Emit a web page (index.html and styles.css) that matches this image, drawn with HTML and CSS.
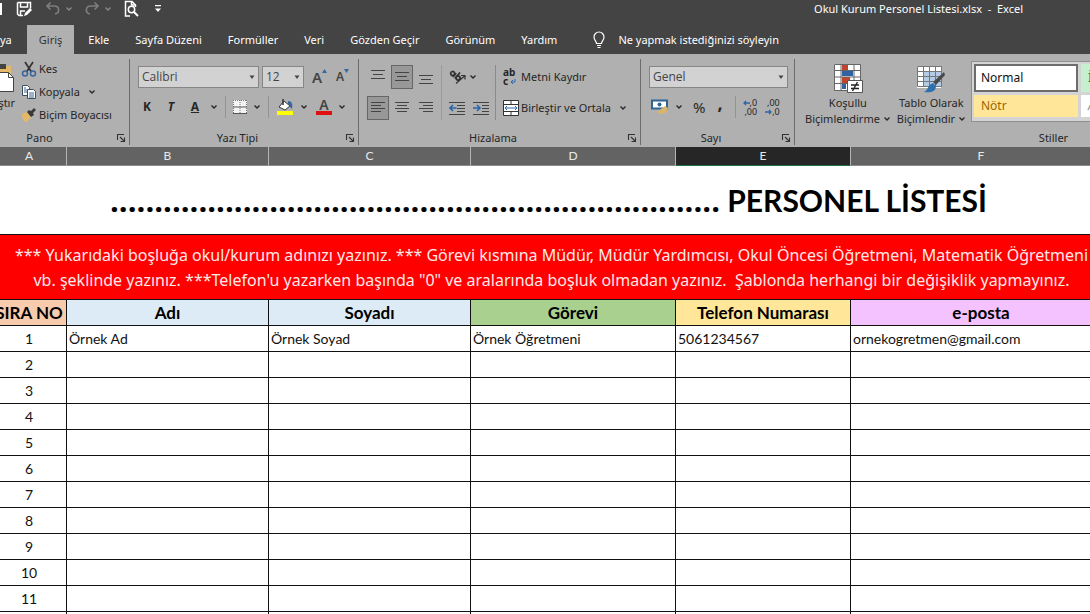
FILE: index.html
```html
<!DOCTYPE html>
<html lang="tr">
<head>
<meta charset="utf-8">
<title>Okul Kurum Personel Listesi.xlsx - Excel</title>
<link rel="stylesheet" href="styles.css">
</head>
<body>
<svg class="defs" aria-hidden="true">
  <symbol id="chev" viewBox="0 0 8 8"><path d="M1.5 2.5 4 5l2.500-2.500" fill="none" stroke="currentColor" stroke-width="1.300"/></symbol>
  <symbol id="tri" viewBox="0 0 8 8"><path d="M1.500 2.500h5L4 6z" fill="#444"/></symbol>
  <symbol id="launch" viewBox="0 0 10 10"><path d="M1.500 7V1.500H8M4 4l4 4M8.500 4.500v4h-4" fill="none" stroke="#333" stroke-width="1.100"/></symbol>
</svg>

<header class="titlebar">
  <div class="quick">
    <span class="edge"></span>
    <button class="ico save" aria-label="Kaydet"><svg width="16" height="16" viewBox="0 0 16 16"><path d="M1.500 1.500h13v6M7 14.500H3L1.500 13V1.500M4.500 2v4h7V2M4.500 14v-4H9" fill="none" stroke="#fff" stroke-width="1.500"/><path d="m8 15 1-3 5-5 2 2-5 5z" fill="#fff"/></svg></button>
    <button class="ico undo" aria-label="Geri al"><svg width="16" height="16" viewBox="0 0 16 16"><path d="M5.500 1.500 2 5l3.500 3.500M2 5h7c6 0 6 7 1 8" fill="none" stroke="#7d7d7d" stroke-width="1.700"/></svg><svg class="dim" width="8" height="8"><use href="#chev"/></svg></button>
    <button class="ico redo" aria-label="Yinele"><svg width="16" height="16" viewBox="0 0 16 16"><path d="M10.500 1.500 14 5l-3.500 3.500M14 5H7C1 5 1 12 6 13" fill="none" stroke="#7d7d7d" stroke-width="1.700"/></svg><svg class="dim" width="8" height="8"><use href="#chev"/></svg></button>
    <button class="ico preview" aria-label="Baskı önizleme"><svg width="16" height="18" viewBox="0 0 16 18"><path d="M7 16H2.500V1.500H9L12.500 5v2M8.500 1.500V5h4" fill="none" stroke="#fff" stroke-width="1.500"/><circle cx="8.500" cy="9.500" r="3.200" fill="none" stroke="#fff" stroke-width="1.500"/><path d="m11 12 4 4" stroke="#fff" stroke-width="2"/></svg></button>
    <button class="ico" aria-label="Özelleştir"><svg width="8" height="8" viewBox="0 0 8 8"><path d="M1 0h6v1.300H1zM1 3.500h6L4 7z" fill="#fff"/></svg></button>
  </div>
  <div class="doc">Okul Kurum Personel Listesi.xlsx&nbsp; -&nbsp; Excel</div>
</header>

<nav class="tabs">
  <button class="tab cut">ya</button>
  <button class="tab active">Giriş</button>
  <button class="tab">Ekle</button>
  <button class="tab">Sayfa Düzeni</button>
  <button class="tab">Formüller</button>
  <button class="tab">Veri</button>
  <button class="tab">Gözden Geçir</button>
  <button class="tab">Görünüm</button>
  <button class="tab">Yardım</button>
  <button class="tab tell"><svg width="14" height="18" viewBox="0 0 14 18"><path d="M4.500 12.500c0-2.500-2.500-3-2.500-6.500a5 5 0 0 1 10 0c0 3.500-2.500 4-2.500 6.500zM5 14.500h4M5.500 16.500h3" fill="none" stroke="#fff" stroke-width="1.200"/></svg>Ne yapmak istediğinizi söyleyin</button>
</nav>

<section class="ribbon">
  <div class="group pano">
    <div class="body">
      <button class="paste"><svg width="24" height="30" viewBox="0 0 24 30"><path d="M2 3h18v23H2z" fill="#e3b968"/><path d="M6 1h9v5H6z" fill="#444"/><path d="M8.500 9.500h9l5 5v14h-14z" fill="#fff" stroke="#444"/><path d="M17.500 9.500v5h5" fill="none" stroke="#444"/></svg>ştır</button>
      <div class="stack">
        <button class="cmd"><svg width="16" height="16" viewBox="0 0 16 16"><path d="m4 1 6.500 10M12 1 5.500 11" stroke="#333" stroke-width="1.700"/><g fill="none" stroke="#38679a" stroke-width="1.500"><circle cx="4" cy="12.500" r="2.500"/><circle cx="12" cy="12.500" r="2.500"/></g></svg>Kes</button>
        <button class="cmd"><svg width="16" height="16" viewBox="0 0 16 16"><g fill="#fff" stroke="#3e4c5c"><path d="M1.500 1.500h5l2 2v8h-7z"/><path d="M6.500 5.500h6l2 2v7h-8z"/></g><path d="M3 4h2M3 6h3M3 8h3M8 9h5M8 11h5M8 13h5" stroke="#38679a"/></svg>Kopyala<svg class="gap" width="8" height="8"><use href="#chev"/></svg></button>
        <button class="cmd"><svg width="16" height="16" viewBox="0 0 16 16"><path d="m1 7 5-2 4 5-4 5c-3 0-5-3-5-8z" fill="#e3b968"/><path d="m6 5 2-2 2 1 3-3 2 2-3 3 1 2-3 2z" fill="#3a3a3a"/></svg>Biçim Boyacısı</button>
      </div>
    </div>
    <div class="foot"><span>Pano</span><button class="launch" aria-label="Pano ayarları"><svg width="10" height="10"><use href="#launch"/></svg></button></div>
  </div>

  <div class="group font">
    <div class="body rows">
      <div class="row">
        <label class="pick name"><select aria-label="Yazı tipi"><option>Calibri</option></select><svg width="8" height="8"><use href="#tri"/></svg></label>
        <label class="pick size"><select aria-label="Boyut"><option>12</option></select><svg width="8" height="8"><use href="#tri"/></svg></label>
        <button class="grow" aria-label="Büyüt"><b>A</b><svg width="5" height="4" viewBox="0 0 5 4"><path d="M0 4h5L2.500 0z" fill="#38679a"/></svg></button>
        <button class="grow small" aria-label="Küçült"><b>A</b><svg width="5" height="4" viewBox="0 0 5 4"><path d="M0 0h5L2.500 4z" fill="#38679a"/></svg></button>
      </div>
      <div class="row tools">
        <button class="letter bold">K</button>
        <button class="letter italic">T</button>
        <button class="letter"><u>A</u></button>
        <svg width="8" height="8"><use href="#chev"/></svg>
        <i class="vr"></i>
        <button aria-label="Kenarlıklar"><svg width="14" height="14" viewBox="0 0 14 14"><path d="M0 0h14v14H0z" fill="#f4f4f4"/><path d="M.5 0v14M7 0v14M13.500 0v14M0 .5h14" stroke="#777" stroke-dasharray="1 1"/><path d="M0 7h14M0 13.500h14" stroke="#555"/></svg></button>
        <svg width="8" height="8"><use href="#chev"/></svg>
        <i class="vr"></i>
        <button aria-label="Dolgu rengi"><svg width="18" height="18" viewBox="0 0 18 18"><path d="M1 13h16v4H1z" fill="#ff0"/><path d="m8 3 6 5-5 4-6-3z" fill="#fff" stroke="#333"/><path d="M7 1v6" stroke="#333" stroke-width="1.500"/><path d="M12 3c4 0 5 3 4 8-2-1-2-4-4-5z" fill="#38679a"/></svg></button>
        <svg width="8" height="8"><use href="#chev"/></svg>
        <button class="color" aria-label="Yazı rengi">A</button>
        <svg width="8" height="8"><use href="#chev"/></svg>
      </div>
    </div>
    <div class="foot"><span>Yazı Tipi</span><button class="launch" aria-label="Yazı tipi ayarları"><svg width="10" height="10"><use href="#launch"/></svg></button></div>
  </div>

  <div class="group align">
    <div class="body cols">
      <div class="grid3">
        <button class="al" aria-label="Üste hizala"><svg width="14" height="14" viewBox="0 0 14 14"><path d="M0 .5h14M2 4.500h10M0 8.500h14" stroke="#444"/></svg></button>
        <button class="al on" aria-label="Ortala"><svg width="14" height="14" viewBox="0 0 14 14"><path d="M0 2.500h14M2 6.500h10M0 10.500h14" stroke="#444"/></svg></button>
        <button class="al" aria-label="Alta hizala"><svg width="14" height="14" viewBox="0 0 14 14"><path d="M0 5.500h14M2 9.500h10M0 13.500h14" stroke="#444"/></svg></button>
        <button class="al on" aria-label="Sola hizala"><svg width="14" height="14" viewBox="0 0 14 14"><path d="M0 1.500h14M0 4.500h10M0 7.500h14M0 10.500h10" stroke="#444"/></svg></button>
        <button class="al" aria-label="Yatay ortala"><svg width="14" height="14" viewBox="0 0 14 14"><path d="M0 1.500h14M2 4.500h10M0 7.500h14M2 10.500h10" stroke="#444"/></svg></button>
        <button class="al" aria-label="Sağa hizala"><svg width="14" height="14" viewBox="0 0 14 14"><path d="M0 1.500h14M4 4.500h10M0 7.500h14M4 10.500h10" stroke="#444"/></svg></button>
      </div>
      <div class="pairs">
        <div class="row"><button aria-label="Yönlendirme"><svg width="18" height="18" viewBox="0 0 18 18"><g fill="none" stroke="#333" stroke-width="1.800" transform="rotate(40 7 7)"><circle cx="3.500" cy="8" r="2"/><path d="M6 5.500v5M8.500 2.500v8"/><circle cx="10.500" cy="8" r="2"/></g><path d="M7 15.500 15.500 8M12 7.500h4v4" fill="none" stroke="#333" stroke-width="1.200"/></svg></button><svg width="8" height="8"><use href="#chev"/></svg></div>
        <div class="row wide">
          <button aria-label="Girintiyi azalt"><svg width="16" height="14" viewBox="0 0 16 14"><path d="M0 1.500h16M8 4.500h8M8 7.500h8M8 10.500h8M0 13.500h16" stroke="#444"/><path d="M1 7h6.500M4 4 1 7l3 3" fill="none" stroke="#2c66a8" stroke-width="1.600"/></svg></button>
          <button aria-label="Girintiyi artır"><svg width="16" height="14" viewBox="0 0 16 14"><path d="M0 1.500h16M9 4.500h7M9 7.500h7M9 10.500h7M0 13.500h16" stroke="#444"/><path d="M0 7h6.500M4 4l3 3-3 3" fill="none" stroke="#2c66a8" stroke-width="1.600"/></svg></button>
        </div>
      </div>
      <div class="wraps">
        <button class="cmd"><span class="abc"><b>ab</b><b>c<svg width="6" height="6" viewBox="0 0 6 6"><path d="M5 0v3H1M3 1 1 3l2 2" fill="none" stroke="#2c66a8"/></svg></b></span>Metni Kaydır</button>
        <button class="cmd"><svg width="16" height="16" viewBox="0 0 16 16"><path d="M.5.5h15v15H.5z" fill="#fff" stroke="#333"/><path d="M.5 4.500h15M.5 11.500h15M8 .5v4M8 11.500v4" stroke="#333"/><path d="M2 8h12M4 6 2 8l2 2M12 6l2 2-2 2" fill="none" stroke="#2c66a8"/></svg>Birleştir ve Ortala<svg class="gap" width="8" height="8"><use href="#chev"/></svg></button>
      </div>
    </div>
    <div class="foot"><span>Hizalama</span><button class="launch" aria-label="Hizalama ayarları"><svg width="10" height="10"><use href="#launch"/></svg></button></div>
  </div>

  <div class="group number">
    <div class="body rows">
      <div class="row"><label class="pick kind"><select aria-label="Sayı biçimi"><option>Genel</option></select><svg width="8" height="8"><use href="#tri"/></svg></label></div>
      <div class="row tools">
        <button class="money" aria-label="Para birimi"><svg width="18" height="16" viewBox="0 0 18 16"><path d="M1 1.500h15v8H1z" fill="#fff" stroke="#2f6592" stroke-width="2"/><circle cx="8.500" cy="5.500" r="2" fill="#2f6592"/><path d="m6 13 8-6 3 2-2 5-7 1z" fill="#d9b56c"/></svg></button>
        <svg width="8" height="8"><use href="#chev"/></svg>
        <button class="pct">%</button>
        <button class="comma">,</button>
        <i class="vr"></i>
        <button class="dec" aria-label="Ondalık artır"><span><svg width="7" height="6" viewBox="0 0 7 6"><path d="M7 3H1M3 1 1 3l2 2" fill="none" stroke="#2c66a8" stroke-width="1.300"/></svg>,0</span><span>,00</span></button>
        <button class="dec" aria-label="Ondalık azalt"><span>,00</span><span><svg width="7" height="6" viewBox="0 0 7 6"><path d="M0 3h6M4 1l2 2-2 2" fill="none" stroke="#2c66a8" stroke-width="1.300"/></svg>,0</span></button>
      </div>
    </div>
    <div class="foot"><span>Sayı</span><button class="launch" aria-label="Sayı ayarları"><svg width="10" height="10"><use href="#launch"/></svg></button></div>
  </div>

  <div class="group styles">
    <div class="body">
      <button class="big"><svg width="30" height="30" viewBox="0 0 30 30"><path d="M1 1h26v26H1z" fill="#fff"/><path d="M9 1h6v6H9zM9 14h8v6H9z" fill="#c0452f"/><path d="M9 8h11v5H9zM9 20h4v6H9z" fill="#2f62a0"/><path d="M1.500 1.500h26v26h-26zM1 7.500h26M1 14h26M1 20.500h26M8 1v26M14.500 1v6M21 1v26" fill="none" stroke="#666"/><path d="M14.500 17.500h15v12h-15z" fill="#fff" stroke="#555"/><path d="M18 22h8M18 25.500h8M24.500 19l-5 9" stroke="#222" stroke-width="1.400"/></svg><span>Koşullu<br>Biçimlendirme <svg width="8" height="8"><use href="#chev"/></svg></span></button>
      <button class="big"><svg width="30" height="30" viewBox="0 0 30 30"><path d="M1 3h24v22H1z" fill="#fff"/><path d="M7 8h18v16H7z" fill="#b4cbe6"/><path d="M1.500 3.500h24v20h-24zM1 8.500h24M1 13.500h24M1 18.500h24M7.500 3v21M13.500 3v21M19.500 3v21" fill="none" stroke="#777"/><path d="m28 9 1 3-9 10-3-3z" fill="#4a4a4a"/><path d="m17 20 3 3c0 6-6 7-12 6 4-1 4-8 9-9z" fill="#2d70ad"/></svg><span>Tablo Olarak<br>Biçimlendir <svg width="8" height="8"><use href="#chev"/></svg></span></button>
      <div class="gallery">
        <button class="swatch normal">Normal</button>
        <button class="swatch good">İyi</button>
        <button class="swatch neutral">Nötr</button>
        <button class="swatch note">Açıklama</button>
      </div>
    </div>
    <div class="foot"><span>Stiller</span></div>
  </div>
</section>

<main class="sheet">
<table>
  <colgroup><col class="a"><col class="b"><col class="b"><col class="d"><col class="e"><col></colgroup>
  <thead><tr class="letters"><th>A</th><th>B</th><th>C</th><th>D</th><th class="sel">E</th><th>F</th></tr></thead>
  <tbody>
    <tr class="title"><td colspan="6"><span class="blank">.....................................................................</span> PERSONEL LİSTESİ</td></tr>
    <tr class="notice"><td colspan="6">*** Yukarıdaki boşluğa okul/kurum adınızı yazınız. *** Görevi kısmına Müdür, Müdür Yardımcısı, Okul Öncesi Öğretmeni, Matematik Öğretmeni<br>vb. şeklinde yazınız. ***Telefon'u yazarken başında "0" ve aralarında boşluk olmadan yazınız.&nbsp; Şablonda herhangi bir değişiklik yapmayınız.</td></tr>
    <tr class="heads"><th class="peach">SIRA NO</th><th class="blue">Adı</th><th class="blue">Soyadı</th><th class="green">Görevi</th><th class="gold">Telefon Numarası</th><th class="pink">e-posta</th></tr>
    <tr><td>1</td><td>Örnek Ad</td><td>Örnek Soyad</td><td>Örnek Öğretmeni</td><td>5061234567</td><td>ornekogretmen@gmail.com</td></tr>
    <tr><td>2</td><td></td><td></td><td></td><td></td><td></td></tr>
    <tr><td>3</td><td></td><td></td><td></td><td></td><td></td></tr>
    <tr><td>4</td><td></td><td></td><td></td><td></td><td></td></tr>
    <tr><td>5</td><td></td><td></td><td></td><td></td><td></td></tr>
    <tr><td>6</td><td></td><td></td><td></td><td></td><td></td></tr>
    <tr><td>7</td><td></td><td></td><td></td><td></td><td></td></tr>
    <tr><td>8</td><td></td><td></td><td></td><td></td><td></td></tr>
    <tr><td>9</td><td></td><td></td><td></td><td></td><td></td></tr>
    <tr><td>10</td><td></td><td></td><td></td><td></td><td></td></tr>
    <tr><td>11</td><td></td><td></td><td></td><td></td><td></td></tr>
    <tr><td></td><td></td><td></td><td></td><td></td><td></td></tr>
  </tbody>
</table>
</main>
</body>
</html>
```
FILE: styles.css
```css
* { box-sizing: border-box; }
body {
  margin: 0;
  height: 100vh;
  overflow: hidden;
  display: flex;
  flex-direction: column;
  background: #fff;
  font: 12px/16px "Noto Sans", "Open Sans", sans-serif;
  color: #262626;
}
button {
  border: 0;
  padding: 0;
  background: none;
  font: inherit;
  color: inherit;
  white-space: nowrap;
  display: flex;
  align-items: center;
}
svg { display: block; flex: none; }
.defs { position: absolute; width: 0; height: 0; }

/* title bar */
.titlebar {
  flex: none;
  display: flex;
  justify-content: space-between;
  height: 25px;
  padding-right: 67px;
  background: #444;
  color: #fff;
  font-size: 11px;
}
.quick { display: flex; height: 17px; align-items: center; }
.edge { width: 2px; height: 12px; background: #fff; margin-right: 14px; }
.ico { gap: 4px; }
.save { margin-right: 13px; }
.undo { margin-right: 11px; }
.redo { margin-right: 11px; }
.preview { margin-right: 15px; }
.dim { color: #8a8a8a; }
.doc { line-height: 18px; }

/* tabs */
.tabs {
  flex: none;
  display: flex;
  height: 29px;
  background: #444;
  color: #fff;
  font-size: 11px;
}
.tab { padding: 0 13px; }
.tab.cut { padding: 0 15px 0 0; }
.tab.active { background: #b0b0b0; color: #333; padding: 0 12px; }
.tab + .tab.tell { padding-left: 22px; gap: 12px; }
.tab.active + .tab { padding-left: 14px; }

/* ribbon */
.ribbon {
  flex: none;
  display: flex;
  height: 93px;
  overflow: hidden;
  background: #b0b0b0;
  font-size: 11px;
}
.group {
  flex: none;
  display: flex;
  flex-direction: column;
  justify-content: space-between;
  margin: 5px 0 2px;
  border-right: 1px solid #6c6c6c;
}
.pano { width: 181px; margin-left: -51px; }
.font { width: 229px; }
.align { width: 282px; }
.number { width: 154px; }
.styles { width: 519px; }
.body { display: flex; }
.foot { display: flex; align-items: center; height: 14px; padding-right: 1px; line-height: 14px; }
.pano .foot { padding-left: 14px; }
.foot span { flex: 1; text-align: center; }
.launch { width: 12px; }
.row { display: flex; align-items: center; height: 24px; }
.cmd { gap: 2px; height: 20px; }
.gap { margin-left: 6px; }
.paste {
  width: 66px;
  height: 48px;
  flex-direction: column;
  align-items: flex-end;
  justify-content: space-between;
  margin-top: 4px;
}
.stack { display: flex; flex-direction: column; gap: 3px; margin-left: 6px; }
.rows { flex-direction: column; gap: 6px; padding: 6px 0 0 8px; }
.pick { position: relative; display: flex; }
.pick select {
  appearance: none;
  width: 100%;
  height: 22px;
  padding: 0 3px;
  border: 1px solid #868686;
  border-radius: 0;
  background: #d2d2d2;
  color: #444;
  font: 12px/16px "Open Sans", "Noto Sans", sans-serif;
}
.pick svg { position: absolute; right: 3px; top: 7px; }
.name { width: 121px; margin-right: 3px; }
.size { width: 42px; }
.kind { width: 139px; }
.grow { margin-left: 8px; align-items: flex-start; font-size: 15px; color: #444; }
.grow b { font-weight: 600; }
.grow.small { margin-left: 9px; font-size: 12px; }
.tools { gap: 6px; }
.letter { width: 18px; justify-content: center; font-size: 12px; font-weight: 700; }
.italic { font-style: italic; }
.vr { width: 1px; height: 22px; background: #929292; margin: 0 1px; }
.color { width: 16px; height: 16px; justify-content: center; border-bottom: 4px solid #e01010; font-size: 14px; font-weight: 600; line-height: 12px; color: #444; margin-left: 2px; }

.cols { padding-top: 6px; }
.grid3 { display: grid; grid-template-columns: repeat(3, 22px); gap: 7px 2px; padding-left: 8px; }
.al { height: 24px; justify-content: center; }
.al.on { background: #989898; border: 1px solid #666; }
.pairs { display: flex; flex-direction: column; gap: 7px; margin-left: 4px; padding-left: 7px; border-left: 1px solid #9c9c9c; }
.pairs .row { gap: 2px; }
.pairs .wide { gap: 8px; }
.wraps { display: flex; flex-direction: column; gap: 7px; margin-left: 6px; padding-left: 7px; border-left: 1px solid #8a8a8a; }
.wraps .cmd { height: 24px; }
.abc { width: 16px; display: flex; flex-direction: column; font-size: 10px; line-height: 9px; }
.abc b { display: flex; align-items: center; gap: 2px; }
.money { margin-left: 2px; }
.pct { font-size: 15px; margin-left: 4px; }
.comma { align-items: flex-start; font-size: 18px; font-weight: 700; height: 24px; margin: 0 5px 0 6px; }
.dec { flex-direction: column; align-items: flex-end; font-size: 9px; line-height: 9px; margin-right: 2px; }
.dec span { display: flex; align-items: center; }

.big { flex-direction: column; margin: 4px 0 0 10px; gap: 2px; }
.big + .big { margin-left: 6px; }
.big span svg { display: inline-block; }
.gallery {
  flex: 1;
  align-self: flex-start;
  display: grid;
  grid-template-columns: 104px 104px;
  gap: 3px;
  margin: 2px 0 0 5px;
  padding: 2px 2px 4px;
  border: 1px solid #909090;
  background: #d4d4d4;
  font-size: 12px;
}
.swatch { height: 22px; padding: 0 7px; }
.swatch.normal, .swatch.good { height: 28px; }
.normal { background: #fff; border: 2px solid #6c6c6c; color: #111; padding: 0 5px; }
.good { background: #c6efce; color: #18751f; }
.neutral { background: #ffe699; color: #9c6500; }
.note { background: #fff; color: #7f7f7f; font-style: italic; }

/* worksheet */
.sheet { flex: 1; min-height: 0; overflow: hidden; font-family: Lato, "Open Sans", sans-serif; font-variant-ligatures: none; color: #111; }
table {
  width: calc(100% + 30px);
  margin-left: -8px;
  table-layout: fixed;
  border-collapse: separate;
  border-spacing: 0;
}
col.a { width: 75px; }
col.b { width: 202px; }
col.d { width: 205px; }
col.e { width: 175px; }
th, td {
  height: 26px;
  padding: 0 2px;
  border: 0 solid #111;
  border-width: 0 1px 1px 0;
  font-size: 14px;
  line-height: 20px;
  white-space: nowrap;
}
td:first-child { text-align: center; }
.letters th {
  height: 19px;
  border-color: #b5b5b5;
  border-bottom-color: #8a8a8a;
  background: #636363;
  color: #e8e8e8;
  font-size: 12px;
  line-height: 16px;
  font-weight: 400;
}
.letters .sel { background: #262626; border-bottom-color: #217346; }
.title td { height: 69px; padding-right: 8px; font-size: 30px; font-weight: 700; line-height: 36px; color: #000; }
.blank { font-family: "Open Sans", sans-serif; font-size: 31px; }
.notice td { height: 65px; padding-top: 2px; background: #f00; color: #ffe8e8; font-family: "Noto Sans", sans-serif; font-size: 16px; line-height: 25px; }
.heads th { font-size: 17px; font-weight: 700; color: #000; }
.peach { background: #f8cbad; }
.blue { background: #ddebf7; }
.green { background: #a9d08e; }
.gold { background: #ffe699; }
.pink { background: #f4c2ff; }
```
